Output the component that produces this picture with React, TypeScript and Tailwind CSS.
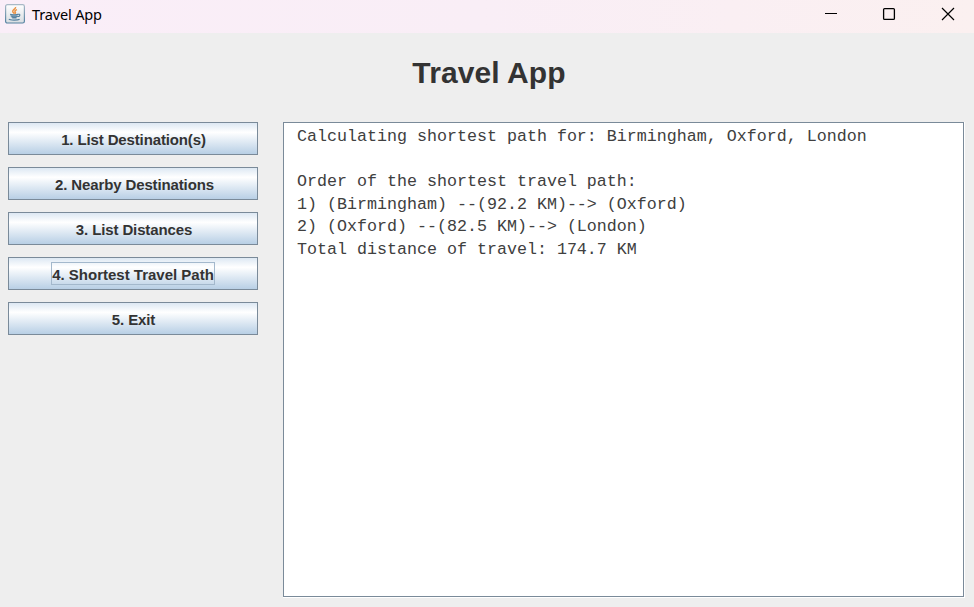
const actions = [
  { label: '1. List Destination(s)', text: 'pt-[3px] pl-px tracking-[-0.13px]' },
  { label: '2. Nearby Destinations', text: 'pt-[3px] pl-[3px] tracking-[-0.13px]' },
  { label: '3. List Distances', text: 'pt-[3px] pl-[2px] tracking-[-0.12px]' },
  {
    label: '4. Shortest Travel Path',
    text: '-mt-px flex h-[23px] w-[164px] items-center justify-center border border-[#a3b8cc] pt-[4px]',
  },
  { label: '5. Exit', text: 'pt-[3px] pl-px tracking-[-0.1px]' },
];

const output = [
  'Calculating shortest path for: Birmingham, Oxford, London',
  '',
  'Order of the shortest travel path:',
  '1) (Birmingham) --(92.2 KM)--> (Oxford)',
  '2) (Oxford) --(82.5 KM)--> (London)',
  'Total distance of travel: 174.7 KM',
].join('\n');

function JavaIcon() {
  return (
    <svg width="20" height="20" viewBox="0 0 20 20" fill="none">
      <defs>
        <linearGradient id="tile" x1="0" y1="0" x2="0" y2="1">
          <stop offset="0" stopColor="#ffffff" />
          <stop offset="1" stopColor="#d8dde1" />
        </linearGradient>
        <linearGradient id="edge" x1="0" y1="0" x2="0" y2="1">
          <stop offset="0" stopColor="#a9b9c6" />
          <stop offset="1" stopColor="#52809f" />
        </linearGradient>
      </defs>
      <rect x="0.6" y="0.6" width="18.8" height="18.4" rx="1.8" fill="url(#tile)" stroke="url(#edge)" strokeWidth="1.2" />
      <path d="M10.6 3C11 5 7.4 5.8 7.7 7.5C7.9 8.4 9 8.8 9.2 9.8M12 5.6C9.7 6.4 9.6 7.2 10.3 8.2C10.7 8.8 10.5 9.3 10 9.8" stroke="#ec9243" strokeWidth="1.5" />
      <path d="M5.2 10H12.8C12.8 12.8 11.8 14 10.5 14H7.5C6 14 5.2 12.5 5.2 10Z" fill="#9db4c5" />
      <path d="M5.2 10.2C7 11 11 11 12.8 10.2M6.4 12.2C8 12.8 11 12.8 12.5 12.2M7.2 13.9H11.5M12.8 10.4C15.6 9.6 15.6 12.3 12.6 12.8" stroke="#55809f" strokeWidth="1.1" />
      <path d="M3.9 15.2C5 16.4 13 16.4 14.6 15.2" stroke="#55809f" strokeWidth="1.2" />
    </svg>
  );
}

function TitleBar() {
  return (
    <header className="flex h-[33px] shrink-0 bg-linear-to-r from-[#faeef8] via-[#f9eef6] to-[#fbf0f0] pl-[5px] font-['Noto_Sans',sans-serif]">
      <div className="flex h-[30px] grow items-start gap-[7px] pt-1">
        <JavaIcon />
        <span className="text-[14.5px] leading-5 tracking-[-0.15px] text-black">Travel App</span>
      </div>
      <div className="flex h-7 w-[174px] items-center justify-between pr-[19px] pl-[25px]">
        <svg width="12" height="14" viewBox="0 0 12 14"><path d="M0 6.5H12" stroke="#000" /></svg>
        <svg width="14" height="14" viewBox="0 0 14 14" fill="none"><rect x="1.6" y="1.6" width="10.8" height="10.8" rx="1" stroke="#000" strokeWidth="1.3" /></svg>
        <svg width="14" height="14" viewBox="0 0 14 14"><path d="M1 1L13 13M13 1L1 13" stroke="#000" strokeWidth="1.2" /></svg>
      </div>
    </header>
  );
}

export default function App() {
  return (
    <div className="flex h-[607px] w-[974px] flex-col bg-[#eeeeee] font-['Liberation_Sans',Arial,sans-serif] text-[#333333]">
      <TitleBar />
      <h1 className="h-[89px] pt-[20px] pl-1 text-center text-[30px] leading-10 font-bold tracking-[0.1px]">Travel App</h1>
      <main className="flex grow gap-[25px] pr-[9px] pb-[9px] pl-2">
        <nav className="flex w-[250px] flex-col gap-3">
          {actions.map((a) => (
            <button
              key={a.label}
              className="flex h-[33px] items-center justify-center border border-[#7a8a99] bg-linear-to-b from-[#dde8f3] via-white via-30% to-[#b8cfe5] pt-px text-[15px] font-bold whitespace-nowrap"
            >
              <span className={a.text}>{a.label}</span>
            </button>
          ))}
        </nav>
        <section className="flex grow border-r border-b border-white">
          <pre className="grow border border-[#7a8a99] bg-white pt-[3px] pl-[13px] font-['Liberation_Mono','Courier_New',monospace] text-[16.67px] leading-[22.6px] text-[#404040]">
            {output}
          </pre>
        </section>
      </main>
    </div>
  );
}
